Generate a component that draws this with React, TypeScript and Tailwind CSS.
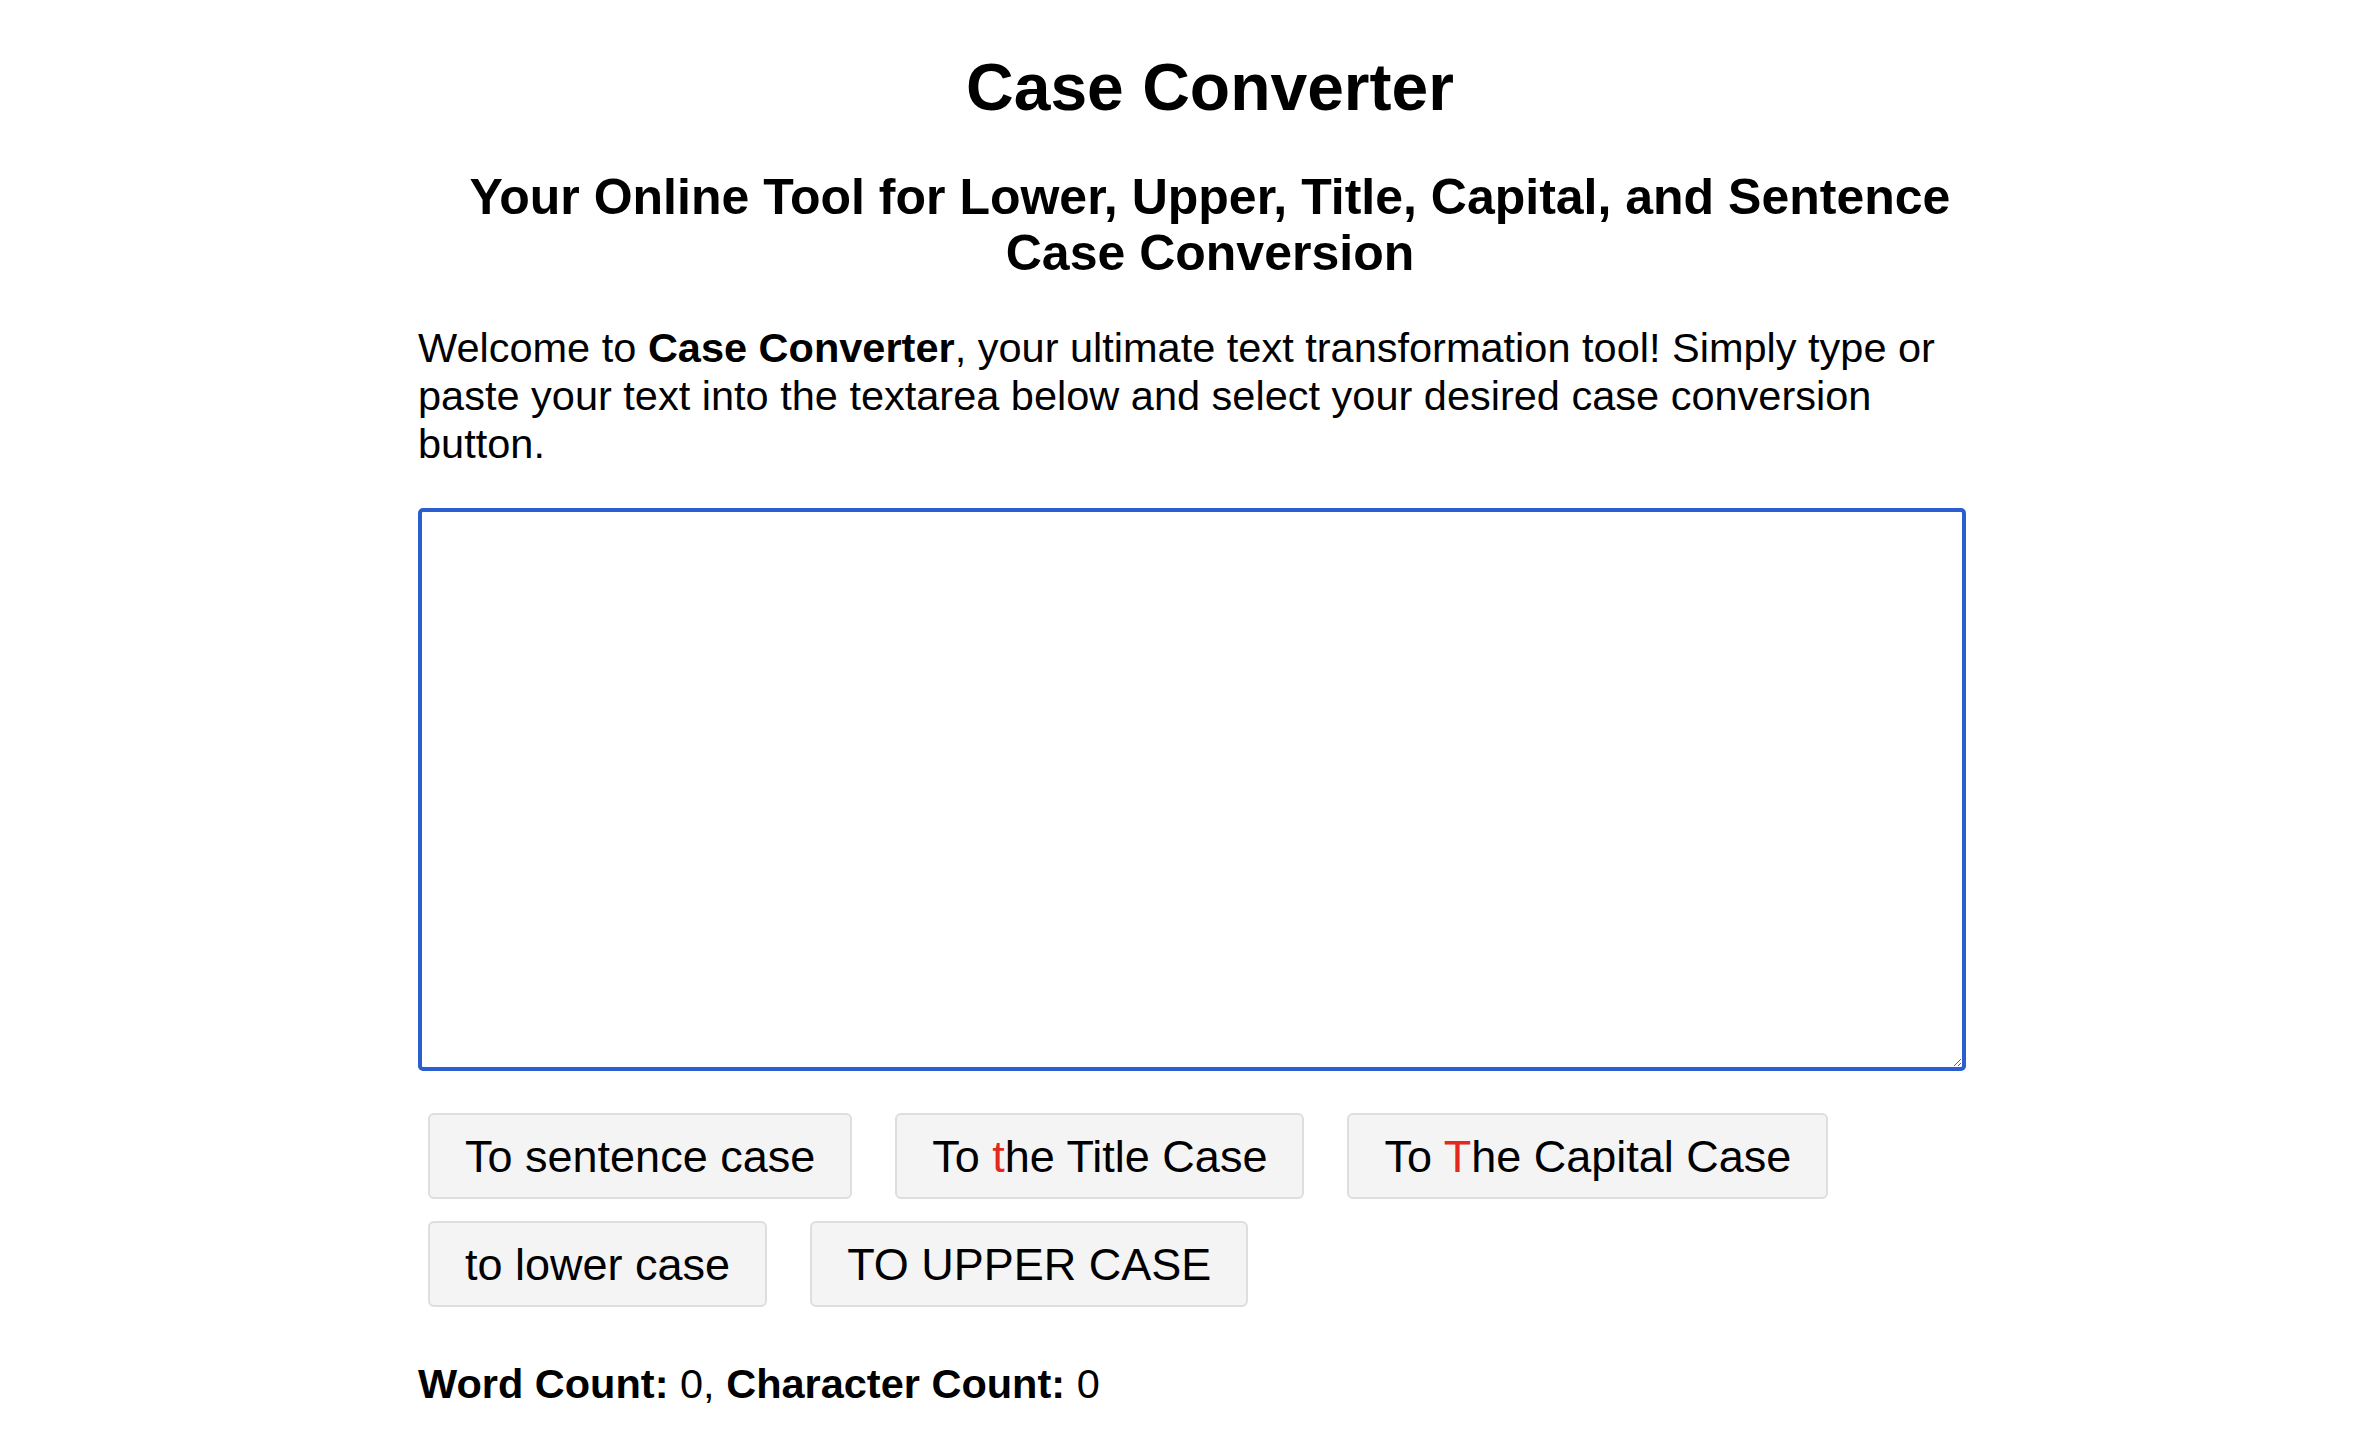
import React, { useState } from 'react';

const App = () => {
  const [text, setText] = useState('');

  const words = text.trim() ? text.trim().split(/\s+/).length : 0;

  const toSentence = () =>
    setText(text.toLowerCase().replace(/(^\s*\w|[.!?]\s+\w)/g, (m) => m.toUpperCase()));
  const toTitle = () =>
    setText(
      text
        .toLowerCase()
        .replace(/\b\w/g, (m) => m.toUpperCase())
        .replace(/\s(A|An|The|And|But|Or|For|Nor|On|At|To|By|Of|In)\b/g, (m) => m.toLowerCase())
    );
  const toCapital = () => setText(text.toLowerCase().replace(/\b\w/g, (m) => m.toUpperCase()));

  const btn =
    'h-[86px] px-[35px] bg-[#f4f4f4] border-2 border-[#dedede] rounded-[6px] text-[45px] leading-none text-black';

  return (
    <div className="min-h-screen bg-white text-black font-['Liberation_Sans',Arial,Helvetica,sans-serif]">
      <div className="max-w-[1554px] mx-auto pl-[6px]">
        <h1 className="pt-[49px] pl-[36px] text-center text-[66px] leading-[76px] font-bold">
          Case Converter
        </h1>

        <h2 className="mt-[44px] pl-[36px] text-center text-[50px] leading-[56px] font-bold">
          Your Online Tool for Lower, Upper, Title, Capital, and Sentence Case Conversion
        </h2>

        <p className="mt-[43px] text-[41.5px] leading-[48px]">
          Welcome to <strong className="font-bold">Case Converter</strong>, your ultimate text
          transformation tool! Simply type or paste your text into the textarea below and select
          your desired case conversion button.
        </p>

        <textarea
          value={text}
          onChange={(e) => setText(e.target.value)}
          className="block mt-[40px] w-full h-[563px] border-[4px] border-[#2b5fcf] rounded-[5px] p-2 text-[40px] outline-none"
        />

        <div className="mt-[42px] pl-[10px] flex flex-wrap gap-x-[43px] gap-y-[22px]">
          <button className={btn} onClick={toSentence}>
            To sentence case
          </button>
          <button className={btn} onClick={toTitle}>
            To <span className="text-[#e3281e]">t</span>he Title Case
          </button>
          <button className={btn} onClick={toCapital}>
            To <span className="text-[#e3281e]">T</span>he Capital Case
          </button>
          <button className={btn} onClick={() => setText(text.toLowerCase())}>
            to lower case
          </button>
          <button className={btn} onClick={() => setText(text.toUpperCase())}>
            TO UPPER CASE
          </button>
        </div>

        <p className="mt-[53px] text-[41.5px] leading-[48px]">
          <strong className="font-bold">Word Count:</strong> {words},{' '}
          <strong className="font-bold">Character Count:</strong> {text.length}
        </p>
      </div>
    </div>
  );
};

export default App;
